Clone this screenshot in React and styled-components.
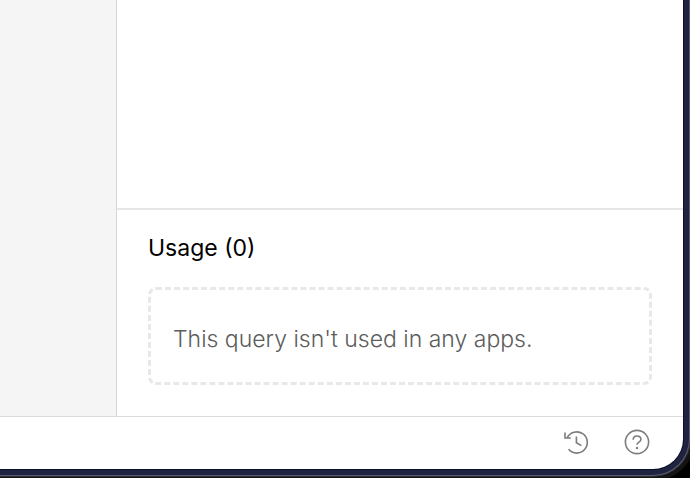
import styled, { createGlobalStyle } from "styled-components";

const GlobalStyle = createGlobalStyle`
    * {
        box-sizing: border-box;
    }

    body {
        margin: 0;
        background-color: #000;
        font-family: Inter, "Liberation Sans", sans-serif;
    }
`;

const Desktop = styled.div`
    display: flex;
    min-height: 100vh;
    padding: 0 7px 9px 0;
    overflow: hidden;
`;

const AppWindow = styled.div`
    flex: 1;
    display: flex;
    flex-direction: column;
    background-color: #fff;
    border-radius: 0 0 30px 0;
    overflow: hidden;
    /* Window frame: body of the frame, its light edge, then a faint outer rim */
    box-shadow: 0 0 0 1px #0a0f2c, 0 0 0 6px #20233f, 0 0 0 7px #5a5b70, 0 0 0 8px #2c2c34, 0 0 0 12px #141414;
`;

const Workspace = styled.div`
    flex: 1;
    display: flex;
`;

const Sidebar = styled.aside`
    width: 117px;
    flex-shrink: 0;
    background-color: #f5f5f5;
    border-right: 1px solid #d6d6d6;
`;

const QueryPanel = styled.main`
    flex: 1;
    display: flex;
    flex-direction: column;
`;

const QueryEditor = styled.div`
    flex: 1;
`;

const UsageSection = styled.section`
    padding: 24px 31px 31px;
    border-top: 2px solid #e6e6e6;
`;

const SectionTitle = styled.h2`
    margin: 0 0 25px;
    font-size: 23px;
    font-weight: 400;
    line-height: 28px;
    color: #000;
`;

const EmptyState = styled.p`
    margin: 0;
    padding: 35px 22px 29px;
    border: 3px dashed #e8e8e8;
    border-radius: 8px;
    font-size: 23px;
    font-weight: 300;
    line-height: 28px;
    color: #5c5c5c;
`;

const StatusBar = styled.footer`
    display: flex;
    align-items: center;
    justify-content: flex-end;
    gap: 32px;
    height: 53px;
    padding: 0 32px 2px;
    border-top: 1px solid #dcdcdc;
`;

const IconButton = styled.button`
    display: flex;
    padding: 0;
    border: none;
    background: none;
    color: #7c7c7c;
    cursor: pointer;

    svg {
        width: 28px;
        height: 28px;
        fill: none;
        stroke: currentColor;
        stroke-width: 1.6;
    }
`;

function HistoryIcon() {
    return (
        <svg viewBox="0 0 28 28" aria-hidden="true">
            <path d="M4.2 9.8A10.6 10.6 0 1 1 5.6 21.3" />
            <path d="M2 4.6V10H7.8" />
            <path d="M13.4 8.5V14.7L18.4 17.6" />
        </svg>
    );
}

function HelpIcon() {
    return (
        <svg viewBox="0 0 28 28" aria-hidden="true">
            <circle cx="14" cy="14" r="11.6" />
            <path d="M10.2 11.7C10.2 9.4 11.8 8 14 8C16.3 8 17.9 9.5 17.9 11.5C17.9 14.2 14 14 14 16.8" />
            <circle cx="14" cy="20" r="1.2" fill="currentColor" stroke="none" />
        </svg>
    );
}

function Usage({ apps }) {
    return (
        <UsageSection aria-labelledby="usage-title">
            <SectionTitle id="usage-title">Usage ({apps.length})</SectionTitle>
            {apps.length === 0 && <EmptyState>This query isn't used in any apps.</EmptyState>}
        </UsageSection>
    );
}

export default function App() {
    return (
        <>
            <GlobalStyle />
            <Desktop>
                <AppWindow>
                    <Workspace>
                        <Sidebar />
                        <QueryPanel>
                            <QueryEditor />
                            <Usage apps={[]} />
                        </QueryPanel>
                    </Workspace>
                    <StatusBar>
                        <IconButton type="button" aria-label="History">
                            <HistoryIcon />
                        </IconButton>
                        <IconButton type="button" aria-label="Help">
                            <HelpIcon />
                        </IconButton>
                    </StatusBar>
                </AppWindow>
            </Desktop>
        </>
    );
}
